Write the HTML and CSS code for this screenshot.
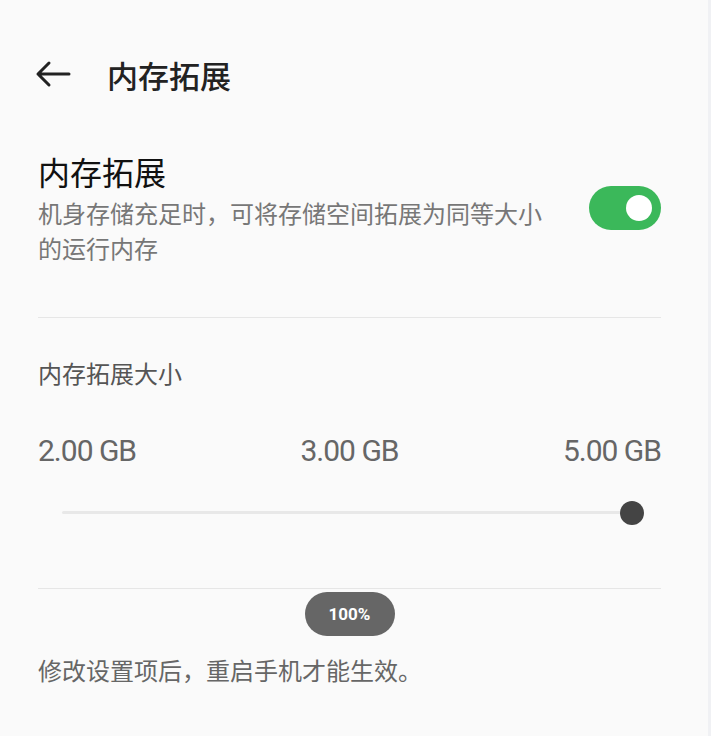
FILE: index.html
```html
<!DOCTYPE html>
<html lang="zh-CN">
<head>
    <meta charset="UTF-8">
    <meta name="viewport" content="width=device-width, initial-scale=1.0">
    <title>内存拓展</title>
    <link rel="stylesheet" href="styles.css">
</head>
<body>

    <div class="page">
        <div class="top-bar">
            <svg class="back-icon" width="36" height="28" viewBox="0 0 36 28">
                <path d="M34 14H3M14 3L3 14l11 11" fill="none" stroke="#222" stroke-width="3" stroke-linecap="round" stroke-linejoin="round"/>
            </svg>
            <h1 class="page-title">内存拓展</h1>
        </div>

        <div class="setting-row">
            <div class="setting-text">
                <h2 class="setting-title">内存拓展</h2>
                <p class="setting-desc">机身存储充足时，可将存储空间拓展为同等大小的运行内存</p>
            </div>
            <div class="switch on"><span class="knob"></span></div>
        </div>

        <div class="divider"></div>

        <div class="size-block">
            <h3 class="size-title">内存拓展大小</h3>
            <div class="size-labels">
                <span>2.00 GB</span>
                <span>3.00 GB</span>
                <span>5.00 GB</span>
            </div>
            <div class="slider">
                <div class="track"></div>
                <span class="thumb"></span>
            </div>
        </div>

        <div class="divider bottom"></div>

        <div class="pill-row">
            <span class="pill">100%</span>
        </div>

        <p class="note">修改设置项后，重启手机才能生效。</p>
    </div>

</body>
</html>
```

FILE: styles.css
```css
body {
    margin: 0;
    padding: 0;
    background-color: #fafafa;
    font-family: Roboto, "Noto Sans CJK SC", sans-serif;
    height: 736px;
    overflow: hidden;
    border-right: 3px solid #f0f1f4;
    box-sizing: border-box;
}

.page {
    width: 623px;
    margin-left: 38px;
    padding-top: 54px;
}

.top-bar {
    display: flex;
    align-items: center;
    height: 40px;
    margin-left: -3px;
}

.back-icon {
    margin-right: 36px;
}

.page-title {
    margin: 0;
    font-size: 31px;
    font-weight: 500;
    color: #222;
}

.setting-row {
    display: flex;
    justify-content: space-between;
    align-items: flex-start;
    margin-top: 60px;
}

.setting-text {
    width: 506px;
}

.setting-title {
    margin: 0;
    font-size: 32px;
    font-weight: 400;
    color: #111;
    line-height: 40px;
}

.setting-desc {
    margin: 4px 0 0;
    font-size: 24px;
    line-height: 35px;
    color: #777;
}

.switch {
    width: 72px;
    height: 44px;
    border-radius: 22px;
    background-color: #3bb85a;
    position: relative;
    margin-top: 32px;
}

.switch .knob {
    position: absolute;
    right: 9px;
    top: 9px;
    width: 26px;
    height: 26px;
    border-radius: 50%;
    background-color: #fff;
}

.divider {
    height: 1px;
    background-color: #e6e6e6;
    margin-top: 49px;
}

.size-block {
    padding-top: 41px;
}

.size-title {
    margin: 0;
    font-size: 24px;
    font-weight: 400;
    color: #555;
    line-height: 32px;
}

.size-labels {
    display: flex;
    justify-content: space-between;
    margin-top: 42px;
    font-size: 30px;
    letter-spacing: -1px;
    color: #666;
    line-height: 36px;
}

.slider {
    position: relative;
    margin: 31px 22px 0 24px;
    height: 26px;
}

.slider .track {
    position: absolute;
    left: 0;
    right: 0;
    top: 11px;
    height: 3px;
    border-radius: 2px;
    background-color: #e8e8e8;
}

.slider .thumb {
    position: absolute;
    right: -5px;
    top: 1px;
    width: 24px;
    height: 24px;
    border-radius: 50%;
    background-color: #444;
}

.divider.bottom {
    margin-top: 62px;
}

.pill-row {
    display: flex;
    justify-content: center;
    margin-top: 3px;
}

.pill {
    width: 90px;
    height: 44px;
    border-radius: 22px;
    background-color: #666;
    color: #fff;
    font-size: 17px;
    font-weight: 700;
    display: flex;
    align-items: center;
    justify-content: center;
}

.note {
    margin: 20px 0 0;
    font-size: 24px;
    color: #666;
    line-height: 32px;
}
```
